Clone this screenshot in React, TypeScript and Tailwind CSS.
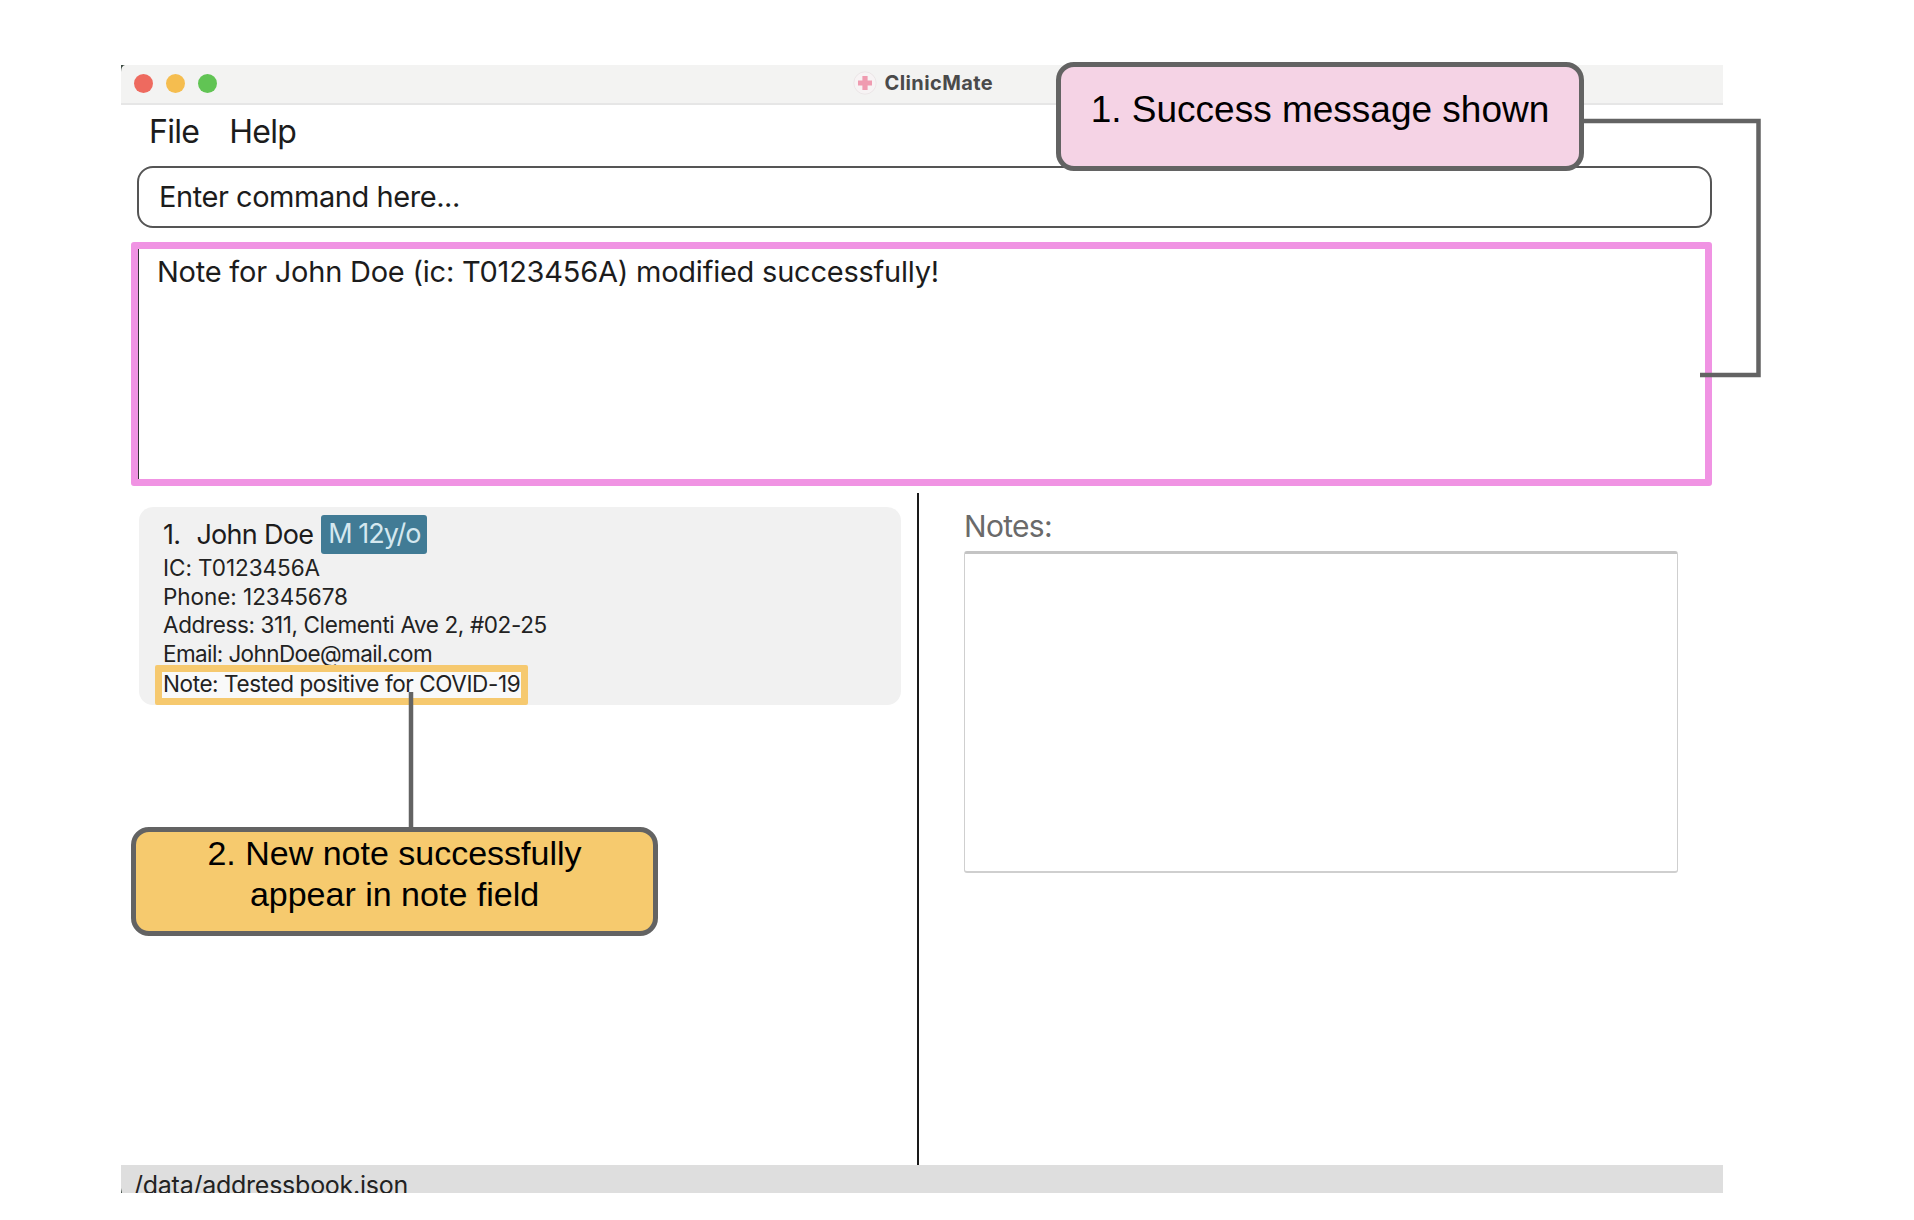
export default function App() {
  const sf = 'font-["Inter",sans-serif]';
  return (
    <div className={`relative w-[1914px] h-[1220px] bg-white overflow-hidden ${sf} text-[#1c1c1c]`}>
      <div className="ml-[121px] pt-[65px] w-[1602px]">
        <div className="flex flex-col h-[1128px]">
          {/* Title bar */}
          <div className="relative h-[40px] shrink-0 bg-[#f3f3f2] border-b-2 border-[#e6e6e6] flex items-center pb-[2px]">
            <div className="flex gap-[13px] ml-[12.5px]">
              <span className="w-[19px] h-[19px] rounded-full bg-[#ee6a5f]" />
              <span className="w-[19px] h-[19px] rounded-full bg-[#f5bd4f]" />
              <span className="w-[19px] h-[19px] rounded-full bg-[#61c454]" />
            </div>
            <div className="ml-[636px] flex items-center gap-[8px]">
              <svg width="24" height="24" viewBox="0 0 24 24">
                <circle cx="12" cy="12" r="11.2" fill="#f7f3f4" stroke="#ebe6e7" strokeWidth="1" />
                <path d="M9.4 5h5.2v4.4H19v5.2h-4.4V19H9.4v-4.4H5V9.4h4.4z" fill="#ef9bb0" />
              </svg>
              <span className="text-[20px] font-bold text-[#4a4a4a] tracking-[0.4px]">ClinicMate</span>
            </div>
          </div>
          {/* Menu */}
          <div className="h-[61px] shrink-0 flex items-center pl-[28px] gap-[30px] text-[32px] tracking-[-0.7px] pb-[8px]">
            <span>File</span>
            <span>Help</span>
          </div>
          {/* Command box */}
          <div className="h-[62px] shrink-0 ml-[16px] mr-[11px] border-2 border-[#555555] rounded-[16px] flex items-center pl-[20px] text-[29px] tracking-[-0.45px]">
            Enter command here...
          </div>
          {/* Result box */}
          <div className="h-[244px] shrink-0 mt-[14px] ml-[10px] mr-[11px] border-[7px] border-[#f093e3] rounded-[3px]">
            <div className="h-full border-l border-[#333333] pl-[18px] pt-[5px] text-[29px] tracking-[-0.23px] leading-[36px]">
              Note for John Doe (ic: T0123456A) modified successfully!
            </div>
          </div>
          {/* Split */}
          <div className="flex-1 flex pt-[7px] min-h-0">
            <div className="w-[796px] shrink-0 pl-[18px] pt-[14px]">
              <div className="w-[762px] h-[198px] bg-[#f1f1f1] rounded-[14px] flex flex-col pl-[16px]">
                <div className="h-[47px] shrink-0 flex items-center pl-[8px] pt-[8px] text-[27px] tracking-[-0.7px]">
                  <span className="mr-[16px] pt-[2px]">1.</span>
                  <span className="pt-[2px]">John Doe</span>
                  <span className="ml-[8px] h-[39px] w-[106px] bg-[#417b95] rounded-[3px] text-[#d5e8ef] flex items-center justify-center tracking-[-0.95px]">
                    M 12y/o
                  </span>
                </div>
                <div className="pl-[8px] text-[22.5px] leading-[28.5px] text-[#222222]">
                  <div className="tracking-[-0.05px]">IC: T0123456A</div>
                  <div className="tracking-[-0.05px]">Phone: 12345678</div>
                  <div className="tracking-[-0.38px]">Address: 311, Clementi Ave 2, #02-25</div>
                  <div className="tracking-[-0.6px]">Email: JohnDoe@mail.com</div>
                </div>
                <div className="-mt-[3px] h-[40px] w-[373px] shrink-0 border-[7px] border-[#f6c96f] rounded-[2px] bg-[#f9f9f9] flex items-center pl-[1px] pb-[3px] text-[22.5px] tracking-[-0.4px] whitespace-nowrap text-[#222222]">
                  Note: Tested positive for COVID-19
                </div>
              </div>
            </div>
            <div className="w-[2px] shrink-0 bg-[#1a1a1a]" />
            <div className="flex-1 pl-[45px] pt-[15px]">
              <div className="h-[43px] text-[30px] leading-[36px] tracking-[-0.7px] text-[#6a6a6a]">Notes:</div>
              <div className="w-[714px] h-[322px] bg-white border border-[#cfcfcf] border-t-[3px] border-t-[#c4c4c4] border-b-2 rounded-[3px]" />
            </div>
          </div>
          {/* Status bar */}
          <div className="h-[28px] shrink-0 bg-[#dedede] overflow-hidden pl-[13px] text-[25px] leading-[40px] tracking-[-0.25px] text-[#222222]">
            /data/addressbook.json
          </div>
        </div>
      </div>

      {/* Annotations */}
      <svg className="absolute left-0 top-0 pointer-events-none" width="1914" height="1220" fill="none">
        <path d="M121 72 Q121 66 125 65 L121 65Z" fill="#3c4a42" />
        <path d="M121 1193 V1188 L122 1193Z" fill="#3c4a42" />
        <path d="M1700 375 H1758.5 V121 H1584" stroke="#636363" strokeWidth="4.5" />
        <path d="M411 692 V827" stroke="#636363" strokeWidth="4.5" />
      </svg>
      <div className='absolute left-[1056px] top-[62px] w-[528px] h-[109px] bg-[#f5d3e5] border-[5px] border-[#636363] rounded-[18px] font-["Liberation_Sans",sans-serif] text-black text-[37px] leading-[42px] text-center pt-[22px] whitespace-nowrap'>
        1. Success message shown
      </div>
      <div className='absolute left-[131px] top-[827px] w-[527px] h-[109px] bg-[#f6ca6e] border-[5px] border-[#636363] rounded-[18px] font-["Liberation_Sans",sans-serif] text-black text-[34px] leading-[41px] text-center pt-[1px]'>
        2. New note successfully
        <br />
        appear in note field
      </div>
    </div>
  );
}
